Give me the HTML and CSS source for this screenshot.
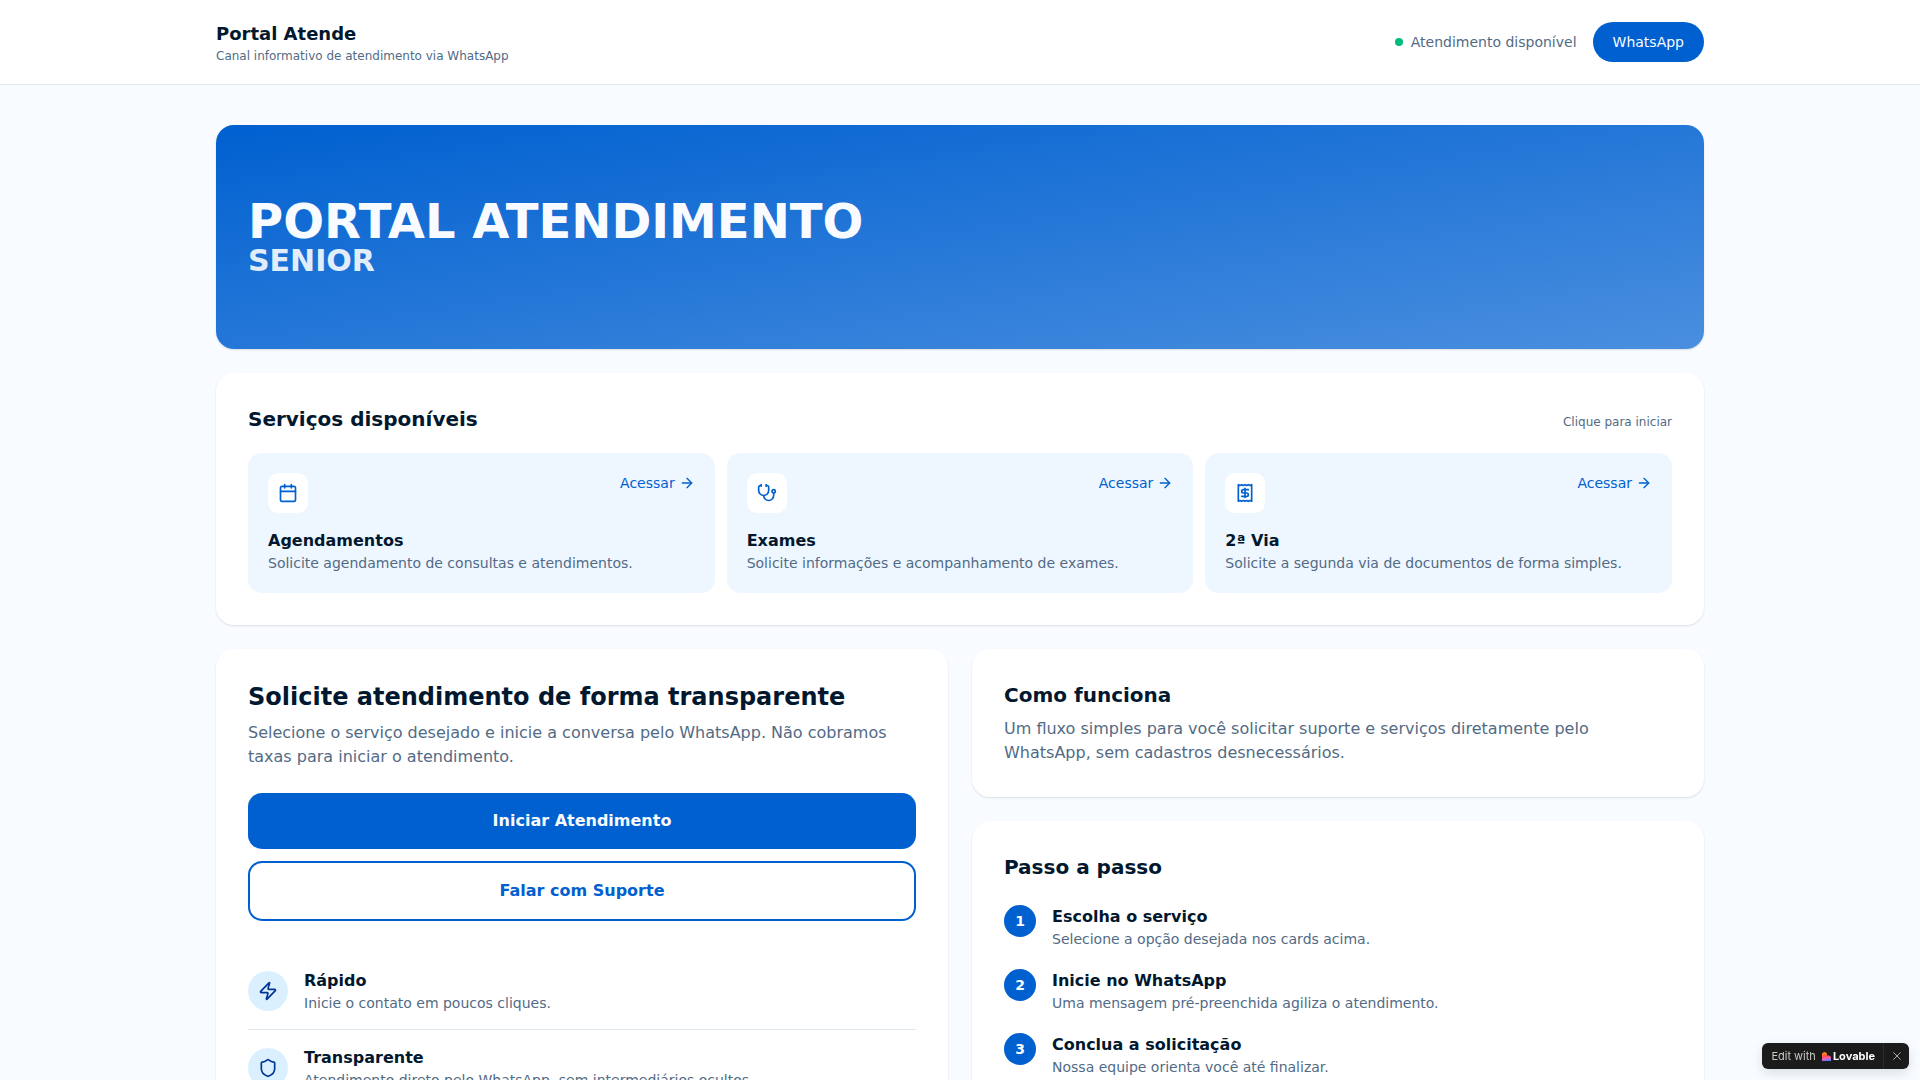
FILE: index.html
```html
<!DOCTYPE html>
<html lang="pt-BR">
<head>
<meta charset="UTF-8">
<meta name="viewport" content="width=device-width, initial-scale=1.0">
<title>Portal Atende</title>
<link rel="stylesheet" href="styles.css">
</head>
<body>

<header class="site-header">
    <div class="container header-inner">
        <div>
            <div class="brand">Portal Atende</div>
            <div class="tagline">Canal informativo de atendimento via WhatsApp</div>
        </div>
        <div class="header-actions">
            <div class="status"><span class="status-dot"></span>Atendimento disponível</div>
            <a class="btn-pill" href="#whatsapp">WhatsApp</a>
        </div>
    </div>
</header>

<main class="container main">
    <section class="hero">
        <h1 class="hero-title">PORTAL ATENDIMENTO</h1>
        <p class="hero-subtitle">SENIOR</p>
    </section>

    <section class="card">
        <div class="card-head">
            <h2>Serviços disponíveis</h2>
            <span class="hint">Clique para iniciar</span>
        </div>
        <div class="services">
            <a class="service" href="#agendamentos">
                <div class="service-top">
                    <span class="service-icon">
                        <svg class="icon" viewBox="0 0 24 24"><path d="M8 2v4"/><path d="M16 2v4"/><rect width="18" height="18" x="3" y="4" rx="2"/><path d="M3 10h18"/></svg>
                    </span>
                    <span class="service-link">Acessar
                        <svg class="icon icon-small" viewBox="0 0 24 24"><path d="M5 12h14"/><path d="m12 5 7 7-7 7"/></svg>
                    </span>
                </div>
                <h3>Agendamentos</h3>
                <p>Solicite agendamento de consultas e atendimentos.</p>
            </a>
            <a class="service" href="#exames">
                <div class="service-top">
                    <span class="service-icon">
                        <svg class="icon" viewBox="0 0 24 24"><path d="M11 2v2"/><path d="M5 2v2"/><path d="M5 3H4a2 2 0 0 0-2 2v4a6 6 0 0 0 12 0V5a2 2 0 0 0-2-2h-1"/><path d="M8 15a6 6 0 0 0 12 0v-3"/><circle cx="20" cy="10" r="2"/></svg>
                    </span>
                    <span class="service-link">Acessar
                        <svg class="icon icon-small" viewBox="0 0 24 24"><path d="M5 12h14"/><path d="m12 5 7 7-7 7"/></svg>
                    </span>
                </div>
                <h3>Exames</h3>
                <p>Solicite informações e acompanhamento de exames.</p>
            </a>
            <a class="service" href="#segunda-via">
                <div class="service-top">
                    <span class="service-icon">
                        <svg class="icon" viewBox="0 0 24 24"><path d="M4 2v20l2-1 2 1 2-1 2 1 2-1 2 1 2-1 2 1V2l-2 1-2-1-2 1-2-1-2 1-2-1-2 1Z"/><path d="M16 8h-6a2 2 0 1 0 0 4h4a2 2 0 1 1 0 4H8"/><path d="M12 17.5v-11"/></svg>
                    </span>
                    <span class="service-link">Acessar
                        <svg class="icon icon-small" viewBox="0 0 24 24"><path d="M5 12h14"/><path d="m12 5 7 7-7 7"/></svg>
                    </span>
                </div>
                <h3>2ª Via</h3>
                <p>Solicite a segunda via de documentos de forma simples.</p>
            </a>
        </div>
    </section>

    <div class="columns">
        <section class="card">
            <h2 class="title-large">Solicite atendimento de forma transparente</h2>
            <p class="lead">Selecione o serviço desejado e inicie a conversa pelo WhatsApp. Não cobramos taxas para iniciar o atendimento.</p>
            <div class="actions">
                <button type="button" class="btn btn-primary">Iniciar Atendimento</button>
                <button type="button" class="btn btn-outline">Falar com Suporte</button>
            </div>
            <ul class="features">
                <li>
                    <span class="feature-icon">
                        <svg class="icon" viewBox="0 0 24 24"><path d="M4 14a1 1 0 0 1-.78-1.63l9.9-10.2a.5.5 0 0 1 .86.46l-1.92 6.02A1 1 0 0 0 13 10h7a1 1 0 0 1 .78 1.63l-9.9 10.2a.5.5 0 0 1-.86-.46l1.92-6.02A1 1 0 0 0 11 14z"/></svg>
                    </span>
                    <div>
                        <h3>Rápido</h3>
                        <p>Inicie o contato em poucos cliques.</p>
                    </div>
                </li>
                <li>
                    <span class="feature-icon">
                        <svg class="icon" viewBox="0 0 24 24"><path d="M20 13c0 5-3.500 7.500-7.660 8.950a1 1 0 0 1-.67-.01C7.500 20.500 4 18 4 13V6a1 1 0 0 1 1-1c2 0 4.500-1.200 6.240-2.720a1.170 1.170 0 0 1 1.520 0C14.510 3.810 17 5 19 5a1 1 0 0 1 1 1z"/></svg>
                    </span>
                    <div>
                        <h3>Transparente</h3>
                        <p>Atendimento direto pelo WhatsApp, sem intermediários ocultos.</p>
                    </div>
                </li>
            </ul>
        </section>

        <div class="column">
            <section class="card">
                <h2>Como funciona</h2>
                <p class="lead">Um fluxo simples para você solicitar suporte e serviços diretamente pelo WhatsApp, sem cadastros desnecessários.</p>
            </section>

            <section class="card">
                <h2>Passo a passo</h2>
                <ol class="steps">
                    <li>
                        <span class="step-number">1</span>
                        <div>
                            <h3>Escolha o serviço</h3>
                            <p>Selecione a opção desejada nos cards acima.</p>
                        </div>
                    </li>
                    <li>
                        <span class="step-number">2</span>
                        <div>
                            <h3>Inicie no WhatsApp</h3>
                            <p>Uma mensagem pré-preenchida agiliza o atendimento.</p>
                        </div>
                    </li>
                    <li>
                        <span class="step-number">3</span>
                        <div>
                            <h3>Conclua a solicitação</h3>
                            <p>Nossa equipe orienta você até finalizar.</p>
                        </div>
                    </li>
                </ol>
            </section>
        </div>
    </div>
</main>

<aside class="badge">
    <a class="badge-link" href="#lovable">Edit with
        <svg class="badge-logo" viewBox="0 0 18 18">
            <defs>
                <linearGradient id="heart" x1="0.300" y1="0" x2="0.500" y2="1">
                    <stop offset="0.200" stop-color="#ff7a1a"/>
                    <stop offset="0.500" stop-color="#ff4d5e"/>
                    <stop offset="0.700" stop-color="#f25fb5"/>
                    <stop offset="1" stop-color="#5a7bff"/>
                </linearGradient>
            </defs>
            <path fill="url(#heart)" d="M0 5a5 5 0 0 1 10 0v2h3a5 5 0 0 1 5 5v6H0Z"/>
        </svg>
        <strong>Lovable</strong>
    </a>
    <button type="button" class="badge-close" aria-label="Fechar">
        <svg class="icon" viewBox="0 0 24 24"><path d="M4 4l16 16"/><path d="M20 4 4 20"/></svg>
    </button>
</aside>

</body>
</html>
```
FILE: styles.css
```css
* {
  box-sizing: border-box;
}
body {
  margin: 0;
  font-family: "DejaVu Sans", sans-serif;
  font-size: 16px;
  line-height: 24px;
  background-color: #f8fbff;
  color: #02182e;
}
h1, h2, h3, p, ul, ol {
  margin: 0;
  padding: 0;
}
ul, ol {
  list-style: none;
}
a {
  color: inherit;
  text-decoration: none;
}
h2 {
  font-size: 20px;
  line-height: 28px;
}
h3 {
  font-size: 16px;
  line-height: 24px;
}
.container {
  max-width: 1536px;
  margin: 0 auto;
  padding: 0 24px;
}
.icon {
  width: 20px;
  height: 20px;
  fill: none;
  stroke: currentColor;
  stroke-width: 2;
  stroke-linecap: round;
  stroke-linejoin: round;
}
.icon-small {
  width: 16px;
  height: 16px;
}

/* header */
.site-header {
  background-color: #fff;
  border-bottom: 1px solid #dfe7ef;
}
.header-inner {
  display: flex;
  align-items: center;
  justify-content: space-between;
  padding-top: 20px;
  padding-bottom: 20px;
}
.brand {
  font-size: 18px;
  line-height: 28px;
  font-weight: bold;
}
.tagline, .hint {
  font-size: 12px;
  line-height: 16px;
  color: #526b85;
}
.header-actions {
  display: flex;
  align-items: center;
  gap: 16px;
}
.status {
  display: flex;
  align-items: center;
  gap: 8px;
  font-size: 14px;
  line-height: 20px;
  color: #526b85;
}
.status-dot {
  width: 8px;
  height: 8px;
  border-radius: 50%;
  background-color: #00bc7d;
}
.btn-pill {
  padding: 10px 20px;
  border-radius: 20px;
  background-color: #0060d0;
  color: #f8fbff;
  font-size: 14px;
  line-height: 20px;
}

/* main */
.main {
  display: flex;
  flex-direction: column;
  gap: 24px;
  padding-top: 40px;
  padding-bottom: 40px;
}
.hero {
  display: flex;
  flex-direction: column;
  justify-content: center;
  min-height: 224px;
  padding: 32px;
  border-radius: 18px;
  background: linear-gradient(to bottom right, #0060d0, #4a8fdf);
  color: #f8fbff;
  box-shadow: 0 1px 2px rgba(0, 0, 0, 0.12);
}
.hero-title {
  font-size: 48px;
  line-height: 48px;
}
.hero-subtitle {
  font-size: 30px;
  line-height: 32px;
  font-weight: bold;
  opacity: 0.9;
}
.card {
  padding: 32px;
  border-radius: 18px;
  background-color: #fff;
  box-shadow: 0 1px 2px rgba(0, 0, 0, 0.12);
}
.card-head {
  display: flex;
  align-items: baseline;
  justify-content: space-between;
  margin-bottom: 20px;
}

/* services */
.services {
  display: grid;
  grid-template-columns: repeat(3, 1fr);
  gap: 12px;
}
.service {
  padding: 20px;
  border-radius: 14px;
  background-color: #eef6ff;
}
.service-top {
  display: flex;
  align-items: flex-start;
  justify-content: space-between;
  margin-bottom: 16px;
  color: #0060d0;
}
.service-icon {
  display: flex;
  align-items: center;
  justify-content: center;
  width: 40px;
  height: 40px;
  border-radius: 10px;
  background-color: #fff;
}
.service-link {
  display: flex;
  align-items: center;
  gap: 4px;
  font-size: 14px;
  line-height: 20px;
}
.service p, .features p, .steps p {
  font-size: 14px;
  line-height: 20px;
  color: #526b85;
}

/* columns */
.columns {
  display: grid;
  grid-template-columns: 1fr 1fr;
  align-items: start;
  gap: 24px;
}
.column {
  display: flex;
  flex-direction: column;
  gap: 24px;
}
.title-large {
  font-size: 24px;
  line-height: 32px;
}
.lead {
  margin-top: 8px;
  color: #526b85;
}
.actions {
  display: flex;
  flex-direction: column;
  gap: 12px;
  margin-top: 24px;
}
.btn {
  padding: 16px 24px;
  border: none;
  border-radius: 14px;
  font-family: inherit;
  font-size: 16px;
  line-height: 24px;
  font-weight: bold;
  cursor: pointer;
}
.btn-primary {
  background-color: #0060d0;
  color: #f8fbff;
}
.btn-outline {
  border: 2px solid #0060d0;
  background-color: #fff;
  color: #0060d0;
}
.features {
  margin-top: 32px;
}
.features li {
  display: flex;
  align-items: center;
  gap: 16px;
  padding: 16px 0;
}
.features li + li {
  border-top: 1px solid #dfe7ef;
}
.feature-icon {
  display: flex;
  align-items: center;
  justify-content: center;
  width: 40px;
  height: 40px;
  border-radius: 50%;
  background-color: #dbf0ff;
  color: #003594;
}
.steps {
  display: flex;
  flex-direction: column;
  gap: 20px;
  margin-top: 24px;
}
.steps li {
  display: flex;
  align-items: flex-start;
  gap: 16px;
}
.step-number {
  width: 32px;
  height: 32px;
  border-radius: 50%;
  background-color: #0060d0;
  color: #f8fbff;
  font-size: 14px;
  line-height: 32px;
  font-weight: bold;
  text-align: center;
}

/* floating badge */
.badge {
  position: fixed;
  right: 11px;
  bottom: 11px;
  display: flex;
  height: 26px;
  border-radius: 6px;
  background-color: #1b1b1b;
  color: #c9c7c0;
  font-family: Inter, sans-serif;
  box-shadow: 0 4px 12px rgba(0, 0, 0, 0.12);
}
.badge-link {
  display: flex;
  align-items: center;
  padding: 0 8px 0 9px;
  font-size: 11px;
  line-height: 16px;
}
.badge-logo {
  width: 9px;
  height: 9px;
  margin: 0 2px 0 6px;
}
.badge strong {
  color: #fff;
}
.badge-close {
  display: flex;
  align-items: center;
  justify-content: center;
  width: 26px;
  padding: 0;
  border: none;
  border-left: 1px solid #2c2c2c;
  background: none;
  color: #c9c7c0;
  cursor: pointer;
}
.badge-close .icon {
  width: 10px;
  height: 10px;
}
```
